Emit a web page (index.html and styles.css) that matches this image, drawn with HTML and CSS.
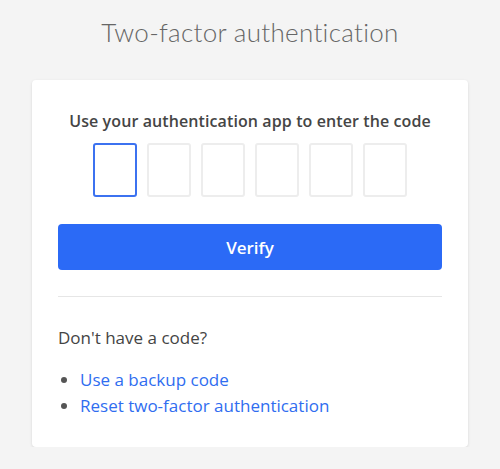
FILE: index.html
```html
<!DOCTYPE html>
<html lang="en">
<head>
<meta charset="utf-8">
<title>Two-factor authentication</title>
<link rel="stylesheet" href="styles.css">
</head>
<body>
<main class="page">
  <h1 class="title">Two-factor authentication</h1>
  <section class="card">
    <h2 class="prompt">Use your authentication app to enter the code</h2>
    <div class="code">
      <input class="digit is-focused" type="text" maxlength="1" aria-label="Digit 1">
      <input class="digit" type="text" maxlength="1" aria-label="Digit 2">
      <input class="digit" type="text" maxlength="1" aria-label="Digit 3">
      <input class="digit" type="text" maxlength="1" aria-label="Digit 4">
      <input class="digit" type="text" maxlength="1" aria-label="Digit 5">
      <input class="digit" type="text" maxlength="1" aria-label="Digit 6">
    </div>
    <button class="verify" type="button">Verify</button>
    <hr class="divider">
    <p class="nocode">Don't have a code?</p>
    <ul class="options">
      <li><a href="#">Use a backup code</a></li>
      <li><a href="#">Reset two-factor authentication</a></li>
    </ul>
  </section>
</main>
</body>
</html>
```
FILE: styles.css
```css
* { box-sizing: border-box; }
html, body { margin: 0; padding: 0; }
body {
  background: #f4f4f4;
  font-family: "Open Sans", "Liberation Sans", sans-serif;
  color: #444;
}
.page {
  display: flex;
  flex-direction: column;
  align-items: center;
  padding-top: 15px;
}
.title {
  margin: 0;
  font-family: Lato, "Open Sans", sans-serif;
  font-weight: 300;
  font-size: 26px;
  line-height: 34px;
  color: #666;
  letter-spacing: 0.3px;
}
.card {
  margin-top: 31px;
  width: 436px;
  background: #fff;
  border-radius: 4px;
  box-shadow: 0 1px 3px rgba(0,0,0,0.12);
  padding: 28px 26px 28px;
  display: flex;
  flex-direction: column;
}
.prompt {
  margin: 0;
  text-align: center;
  font-size: 16px;
  font-weight: 600;
  line-height: 26px;
  color: #454545;
  letter-spacing: 0.1px;
}
.code {
  display: flex;
  justify-content: center;
  gap: 10px;
  margin-top: 9px;
}
.digit {
  width: 44px;
  height: 54px;
  border: 2px solid #ededed;
  border-radius: 3px;
  background: #fff;
  outline: none;
  padding: 0;
}
.digit.is-focused { border-color: #3c72f0; }
.verify {
  margin-top: 27px;
  height: 46px;
  border: 0;
  border-radius: 4px;
  background: #2b6af6;
  color: #fff;
  font-family: inherit;
  font-size: 17px;
  font-weight: 600;
}
.divider {
  margin: 26px 0 0;
  border: 0;
  border-top: 1px solid #e6e6e6;
}
.nocode {
  margin: 28px 0 0;
  font-size: 17px;
  line-height: 26px;
  color: #444;
}
.options {
  margin: 16px 0 0;
  padding-left: 22px;
  font-size: 17px;
  line-height: 26px;
}
.options li::marker { color: #555; }
.options a {
  color: #2f6df0;
  text-decoration: none;
}
```
